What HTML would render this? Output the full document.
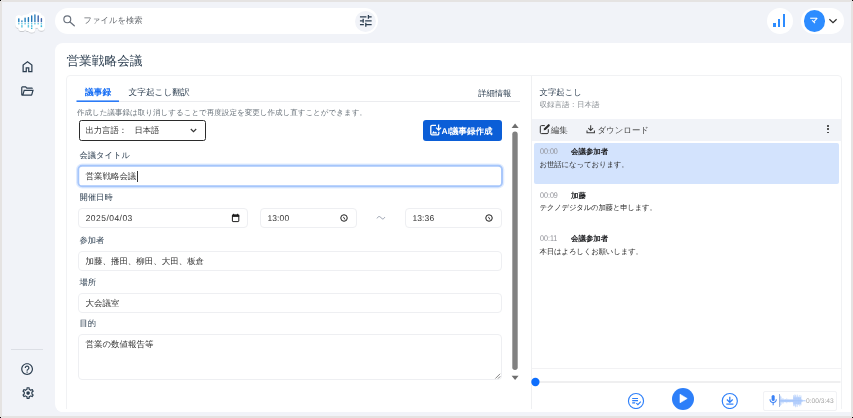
<!DOCTYPE html>
<html lang="ja">
<head>
<meta charset="utf-8">
<title>営業戦略会議</title>
<style>
*{box-sizing:border-box;margin:0;padding:0}
html,body{width:853px;height:418px;overflow:hidden;background:#e5e3e2}
body{text-rendering:geometricPrecision;font-family:"Liberation Sans",sans-serif;color:#3c4043;position:relative;font-size:8.3px;line-height:1}
.abs{position:absolute}
/* all children use absolute target-image coordinates via offset wrappers */
#app{will-change:transform;position:absolute;left:2px;top:2px;width:849px;height:414px;background:#f1f3f8;overflow:hidden}
#appo{position:absolute;left:-2px;top:-2px;width:853px;height:418px}
#main{position:absolute;left:55px;top:43px;width:800px;height:368.5px;background:#fff;border-radius:8px 0 0 8px;overflow:hidden}
#maino{position:absolute;left:-55px;top:-43px;width:853px;height:418px}
.t{position:absolute;white-space:nowrap;line-height:1}
.corner{position:absolute;width:1px;height:1px;background:#000}
.circ{position:absolute;border-radius:50%}
.inp{position:absolute;border:1px solid #eeeff2;border-radius:4px;background:#fff}
.lbl{position:absolute;white-space:nowrap;font-size:8.3px;color:#2c3e50;line-height:1}
.val{position:absolute;white-space:nowrap;font-size:8.47px;color:#333;line-height:1}
.sm{position:absolute;white-space:nowrap;font-size:7.45px;color:#2a2a2a;line-height:1}
.tm{position:absolute;white-space:nowrap;font-size:8.2px;color:#8f9097;line-height:1;transform-origin:0 50%;transform:scaleX(.87)}
.b{font-weight:bold;color:#202124}
</style>
</head>
<body>
<div class="corner" style="left:0;top:0"></div>
<div class="corner" style="left:852px;top:0"></div>
<div class="corner" style="left:0;top:417px"></div>
<div class="corner" style="left:852px;top:417px"></div>
<div id="app"><div id="appo">

<!-- logo -->
<svg class="abs" style="left:10px;top:6px" width="42" height="32" viewBox="10 6 42 32"><defs><filter id="ls" x="-20%" y="-20%" width="140%" height="150%"><feDropShadow dx="0" dy="0.6" stdDeviation="0.7" flood-color="#000" flood-opacity="0.28"/></filter></defs><g filter="url(#ls)"><path d="M18.8 18.7 V24.3" stroke="#fff" stroke-width="7.2" stroke-linecap="round"/><path d="M21.9 20.7 V27.4" stroke="#fff" stroke-width="7.2" stroke-linecap="round"/><path d="M25.1 18.0 V24.3" stroke="#fff" stroke-width="7.2" stroke-linecap="round"/><path d="M28.4 17.6 V27.4" stroke="#fff" stroke-width="7.2" stroke-linecap="round"/><path d="M31.7 15.8 V29.0" stroke="#fff" stroke-width="7.2" stroke-linecap="round"/><path d="M34.9 14.8 V24.3" stroke="#fff" stroke-width="7.2" stroke-linecap="round"/><path d="M38.2 15.8 V24.3" stroke="#fff" stroke-width="7.2" stroke-linecap="round"/><path d="M41.4 18.6 V27.1" stroke="#fff" stroke-width="7.2" stroke-linecap="round"/></g><rect x="18.10" y="18.2" width="1.4" height="4.10" rx="0.6" fill="#1f7fbf"/><rect x="18.10" y="23.30" width="1.4" height="1" fill="#2bb5d8"/><rect x="21.20" y="20.2" width="1.4" height="2.10" rx="0.6" fill="#2a86c4"/><rect x="21.20" y="23.30" width="1.4" height="1" fill="#2bb5d8"/><rect x="21.20" y="25.30" width="1.4" height="1" fill="#2bb5d8"/><rect x="21.20" y="26.40" width="1.4" height="1" fill="#2bb5d8"/><rect x="24.40" y="17.5" width="1.4" height="4.80" rx="0.6" fill="#1f7fbf"/><rect x="24.40" y="23.30" width="1.4" height="1" fill="#2bb5d8"/><rect x="27.70" y="17.1" width="1.4" height="5.20" rx="0.6" fill="#1f78b8"/><rect x="27.70" y="23.30" width="1.4" height="1" fill="#2bb5d8"/><rect x="27.70" y="25.30" width="1.4" height="1" fill="#2bb5d8"/><rect x="27.70" y="26.40" width="1.4" height="1" fill="#2bb5d8"/><rect x="31.00" y="15.3" width="1.4" height="7.00" rx="0.6" fill="#2279b9"/><rect x="31.00" y="23.30" width="1.4" height="1" fill="#2bb5d8"/><rect x="31.00" y="25.30" width="1.4" height="1" fill="#2bb5d8"/><rect x="31.00" y="26.40" width="1.4" height="1" fill="#2bb5d8"/><rect x="31.00" y="28.00" width="1.4" height="1" fill="#2bb5d8"/><rect x="34.20" y="14.3" width="1.4" height="8.00" rx="0.6" fill="#2b7dbb"/><rect x="34.20" y="23.30" width="1.4" height="1" fill="#2bb5d8"/><rect x="37.50" y="15.3" width="1.4" height="7.00" rx="0.6" fill="#3f66ad"/><rect x="37.50" y="23.30" width="1.4" height="1" fill="#2bb5d8"/><rect x="40.70" y="18.1" width="1.4" height="4.20" rx="0.6" fill="#3f66ad"/><rect x="40.70" y="23.30" width="1.4" height="1" fill="#2bb5d8"/><rect x="40.70" y="25.30" width="1.4" height="1" fill="#2bb5d8"/><rect x="40.70" y="26.10" width="1.4" height="1" fill="#2bb5d8"/></svg>

<!-- search -->
<div class="abs" style="left:55px;top:8px;width:322.5px;height:26px;border-radius:13px;background:#fff"></div>
<svg class="abs" style="left:60.8px;top:13px" width="16" height="16" viewBox="0 0 16 16"><circle cx="6.3" cy="6.3" r="3.45" fill="none" stroke="#68707c" stroke-width="1.15"/><path d="M9 9 L13.3 12.8" stroke="#68707c" stroke-width="1.25" stroke-linecap="round"/></svg>
<div class="t" style="left:83.5px;top:16.1px;font-size:8.3px;color:#6b6f74">ファイルを検索</div>
<div class="circ" style="left:355px;top:10.5px;width:21px;height:21px;background:#f1f3f8"></div>
<svg class="abs" style="left:357.5px;top:13.2px" width="15.6" height="15.6" viewBox="0 0 24 24"><path fill="#2c3e50" d="M3 17v2h6v-2H3zM3 5v2h10V5H3zm10 16v-2h8v-2h-8v-2h-2v6h2zM7 9v2H3v2h4v2h2V9H7zm14 4v-2H11v2h10zm-6-4h2V7h4V5h-4V3h-2v6z"/></svg>

<!-- right top -->
<div class="circ" style="left:767px;top:8px;width:26px;height:26px;background:#fff"></div>
<div class="abs" style="left:773px;top:23.2px;width:2.6px;height:3.6px;background:#2d8cff"></div>
<div class="abs" style="left:777.8px;top:19.3px;width:2.6px;height:7.5px;background:#2d8cff"></div>
<div class="abs" style="left:782.6px;top:14.3px;width:2.6px;height:12.5px;background:#2d8cff"></div>
<div class="abs" style="left:801px;top:8px;width:43px;height:26px;border-radius:13px;background:#fff"></div>
<div class="circ" style="left:803.7px;top:10.2px;width:21.4px;height:21.5px;background:#2d8cff"></div>
<div class="t" style="left:809.8px;top:16.3px;font-size:8.4px;color:#fff;font-weight:bold">マ</div>
<svg class="abs" style="left:828px;top:17px" width="10" height="8" viewBox="0 0 10 8"><path d="M1.4 2.3 L5 5.7 L8.6 2.3" fill="none" stroke="#2b2b2b" stroke-width="1.2"/></svg>

<!-- sidebar -->
<svg class="abs" style="left:19.8px;top:59.3px" width="15" height="15" viewBox="0 0 24 24"><path fill="#2c3e50" d="M6 19h3v-6h6v6h3v-9l-6-4.5L6 10Zm-2 2V9l8-6 8 6v12h-7v-6h-2v6Z"/></svg>
<svg class="abs" style="left:20.2px;top:83.6px" width="14.1" height="14.1" viewBox="0 0 24 24"><path fill="#2c3e50" d="M4 20q-.825 0-1.412-.587Q2 18.825 2 18V6q0-.825.588-1.412Q3.175 4 4 4h6l2 2h8q.825 0 1.413.588Q22 7.175 22 8H11.175l-2-2H4v12l2.400-8h17.100l-2.575 8.575q-.2.650-.738 1.038Q19.650 20 19 20Zm2.100-2H19l1.800-6H7.900Z"/></svg>
<div class="abs" style="left:11px;top:348.5px;width:32px;height:1px;background:#dcdfe5"></div>
<svg class="abs" style="left:20.3px;top:361.7px" width="14.2" height="14.2" viewBox="0 0 24 24"><path fill="#2c3e50" d="M11 18h2v-2h-2v2zm1-16C6.48 2 2 6.48 2 12s4.48 10 10 10 10-4.480 10-10S17.52 2 12 2zm0 18c-4.410 0-8-3.590-8-8s3.590-8 8-8 8 3.590 8 8-3.590 8-8 8zm0-14c-2.210 0-4 1.790-4 4h2c0-1.100.9-2 2-2s2 .9 2 2c0 2-3 1.750-3 5h2c0-2.250 3-2.500 3-5 0-2.210-1.790-4-4-4z"/></svg>
<svg class="abs" style="left:20.5px;top:385.6px" width="14.2" height="14.2" viewBox="0 0 24 24"><path fill="#2c3e50" d="M19.430 12.980c.040-.320.070-.640.070-.980 0-.340-.030-.660-.070-.980l2.110-1.650c.190-.150.240-.420.120-.640l-2-3.460c-.090-.160-.260-.250-.440-.250-.060 0-.120.010-.170.030l-2.490 1c-.520-.400-1.080-.730-1.690-.980l-.380-2.650C14.460 2.180 14.250 2 14 2h-4c-.250 0-.460.180-.490.420l-.380 2.650c-.610.250-1.170.590-1.690.98l-2.490-1c-.060-.020-.120-.030-.180-.030-.170 0-.340.090-.430.250l-2 3.460c-.130.220-.070.490.12.640l2.110 1.650c-.040.320-.070.650-.070.980 0 .330.030.660.070.980l-2.110 1.650c-.190.150-.240.420-.12.640l2 3.460c.090.160.260.250.440.250.060 0 .120-.010.170-.030l2.490-1c.520.400 1.080.730 1.690.980l.380 2.650c.030.240.240.420.490.420h4c.250 0 .460-.180.490-.420l.380-2.650c.610-.250 1.170-.590 1.690-.980l2.490 1c.060.020.120.030.180.030.170 0 .340-.090.430-.250l2-3.460c.120-.220.070-.490-.12-.640l-2.110-1.650zm-1.980-1.710c.040.310.050.520.050.730 0 .210-.020.430-.050.730l-.140 1.130.89.700 1.080.840-.7 1.210-1.270-.510-1.040-.420-.9.680c-.430.320-.840.560-1.250.730l-1.060.430-.160 1.130-.2 1.350h-1.400l-.19-1.350-.16-1.130-1.060-.430c-.430-.180-.830-.410-1.230-.710l-.910-.7-1.060.430-1.270.510-.7-1.210 1.080-.840.890-.7-.140-1.130c-.030-.310-.050-.540-.050-.740s.020-.430.050-.730l.140-1.130-.89-.7-1.080-.840.7-1.210 1.270.510 1.040.420.900-.680c.430-.320.840-.560 1.250-.730l1.060-.430.160-1.130.2-1.350h1.390l.19 1.350.16 1.130 1.060.430c.430.180.830.410 1.230.710l.910.7 1.060-.430 1.270-.510.700 1.210-1.070.850-.89.700.14 1.130z"/><circle cx="12" cy="12" r="3.1" fill="#2c3e50"/></svg>

<!-- main -->
<div id="main"><div id="maino">
  <div class="t" style="left:66.4px;top:55px;font-size:12.7px;color:#2c3e50">営業戦略会議</div>
  <div class="abs" id="card" style="left:65.5px;top:75px;width:776px;height:360px;border:1px solid #f1f2f4;border-radius:4px"></div>
  <div class="abs" style="left:531px;top:76px;width:1px;height:340px;background:#eff0f2"></div>

  <div class="abs" style="left:55px;top:409.3px;width:800px;height:4px;background:#fff;z-index:5"></div>
  <!-- LEFT -->
  <div class="t" style="left:85px;top:88px;font-size:8.7px;color:#1a70f5;font-weight:bold">議事録</div>
  <div class="t" style="left:128.5px;top:88px;font-size:8.7px;color:#2c3e50">文字起こし翻訳</div>
  <div class="t" style="left:478.2px;top:88.7px;font-size:8.3px;color:#2c3e50">詳細情報</div>
  <div class="abs" style="left:76.5px;top:101px;width:443.5px;height:1px;background:#ebecef"></div>
  <svg class="abs" style="left:76px;top:99px" width="44" height="4" viewBox="76 99 44 4"><rect x="76.5" y="100.4" width="42.5" height="1.6" fill="#2b7bf7"/></svg>
  <div class="t" style="left:77px;top:108.7px;font-size:7.54px;color:#6c757d">作成した議事録は取り消しすることで再度設定を変更し作成し直すことができます。</div>

  <div class="abs" style="left:78.5px;top:120px;width:127px;height:20.5px;border:1px solid #2b2b2b;border-radius:2.5px;background:#fff"></div>
  <div class="t" style="left:85.5px;top:126px;font-size:8.3px;color:#333">出力言語：<span style="margin-left:7.5px">日本語</span></div>
  <svg class="abs" style="left:190.3px;top:128.3px" width="7" height="5" viewBox="0 0 7 5"><path d="M0.8 1 L3.5 3.7 L6.2 1" fill="none" stroke="#333" stroke-width="1.1"/></svg>

  <div class="abs" style="left:422.6px;top:119.8px;width:79.2px;height:21.2px;border-radius:3px;background:#0b5ed7"></div>
  <svg class="abs" style="left:429px;top:123px" width="13" height="13" viewBox="429 123 13 13"><path d="M436 125.3 H432 a1.2 1.2 0 0 0 -1.2 1.2 V133.6 a1.2 1.2 0 0 0 1.2 1.2 H437.6 a1.2 1.2 0 0 0 1.2 -1.2 V131.8" fill="none" stroke="#fff" stroke-width="1.35"/><path d="M438.6 124.4 V129.8 M436.1 127.6 L438.6 130.1 L441.1 127.6" fill="none" stroke="#fff" stroke-width="1.3"/><path d="M431.9 133.4 L433.6 131 L434.9 132.5 L435.9 131.6 L437.3 133.4 Z" fill="#fff"/></svg>
  <div class="t" style="left:441.6px;top:126.7px;font-size:8.5px;color:#fff;font-weight:bold">AI議事録作成</div>

  <!-- scrollbar -->
    <svg class="abs" style="left:510px;top:120px" width="12" height="264" viewBox="510 120 12 264"><rect x="512.3" y="131.6" width="5.4" height="238.3" rx="2.7" fill="#818181"/><path d="M511.6 128 L515.1 123.6 L518.6 128 Z" fill="#6e6e6e"/><path d="M511.6 375.7 L515.1 380.1 L518.6 375.7 Z" fill="#6e6e6e"/></svg>

  <div class="lbl" style="left:79.5px;top:151.3px">会議タイトル</div>
  <svg class="abs" style="left:75px;top:162px" width="430" height="28" viewBox="75 162 430 28"><rect x="77.5" y="165" width="425.3" height="22.1" rx="4.6" fill="none" stroke="#a9c8fb" stroke-opacity=".35" stroke-width="3"/><rect x="78.3" y="165.8" width="423.7" height="20.5" rx="3.8" fill="#fff" stroke="#a6c6fb" stroke-width="1.9"/></svg>
  <div class="val" style="left:85.5px;top:172px">営業戦略会議</div>
  <div class="abs" style="left:136.5px;top:171px;width:.8px;height:10.5px;background:#333"></div>

  <div class="lbl" style="left:79.5px;top:193.3px">開催日時</div>
  <div class="inp" style="left:78px;top:208px;width:169.5px;height:20px"></div>
  <div class="val" style="left:85.7px;top:213.7px;letter-spacing:.47px">2025/04/03</div>
  <svg class="abs" style="left:231px;top:213px" width="10" height="10" viewBox="231 213 10 10"><rect x="232.4" y="215" width="6.4" height="6.6" rx="0.6" fill="none" stroke="#1f1f1f" stroke-width="1"/><rect x="232" y="214.7" width="7.2" height="2.2" fill="#1f1f1f"/><rect x="233.1" y="213.8" width="1" height="1.4" fill="#1f1f1f"/><rect x="237.1" y="213.8" width="1" height="1.4" fill="#1f1f1f"/></svg>
  <div class="inp" style="left:260px;top:208px;width:97px;height:20px"></div>
  <div class="val" style="left:267.5px;top:213.7px;letter-spacing:.1px">13:00</div>
  <svg class="abs" style="left:375px;top:213px" width="12" height="10" viewBox="375 213 12 10"><path d="M377 218.4 C378.3 215.9 380 216.2 381 217.7 S383.6 219.6 384.8 217.1" fill="none" stroke="#8f98a8" stroke-width="0.95"/></svg>
  <div class="inp" style="left:405.3px;top:208px;width:97px;height:20px"></div>
  <div class="val" style="left:412.5px;top:213.7px;letter-spacing:.1px">13:36</div>

  <svg class="abs" style="left:338.5px;top:213.2px" width="10" height="10" viewBox="0 0 10 10"><circle cx="5" cy="5" r="3.25" fill="none" stroke="#1f1f1f" stroke-width="1"/><path d="M4.6 4.2 L5.8 6.2" stroke="#1f1f1f" stroke-width="0.9" stroke-linecap="round"/></svg>
  <svg class="abs" style="left:483.8px;top:213.2px" width="10" height="10" viewBox="0 0 10 10"><circle cx="5" cy="5" r="3.25" fill="none" stroke="#1f1f1f" stroke-width="1"/><path d="M4.6 4.2 L5.8 6.2" stroke="#1f1f1f" stroke-width="0.9" stroke-linecap="round"/></svg>
  <div class="lbl" style="left:79.5px;top:236.3px">参加者</div>
  <div class="inp" style="left:78px;top:251px;width:424.3px;height:20.4px"></div>
  <div class="val" style="left:85.5px;top:257px">加藤、播田、柳田、大田、板倉</div>

  <div class="lbl" style="left:79.5px;top:277.5px">場所</div>
  <div class="inp" style="left:78px;top:293px;width:424.3px;height:20px"></div>
  <div class="val" style="left:85.5px;top:298.8px">大会議室</div>

  <div class="lbl" style="left:79.5px;top:318.8px">目的</div>
  <div class="inp" style="left:78px;top:334px;width:424.3px;height:45.6px"></div>
  <svg class="abs" style="left:494px;top:372px;z-index:2" width="8" height="8" viewBox="494 372 8 8"><path d="M495.4 378.5 L500.1 373.8 M498 378.6 L500.2 376.4" stroke="#666" stroke-width=".8" fill="none"/></svg>
  <div class="val" style="left:85.5px;top:339.8px">営業の数値報告等</div>

  <!-- RIGHT -->
  <div class="t" style="left:539.5px;top:88px;font-size:8.4px;color:#2c3e50">文字起こし</div>
  <div class="t" style="left:539.5px;top:101px;font-size:7.5px;color:#8a8f94">収録言語：日本語</div>
  <div class="abs" style="left:532px;top:119.2px;width:309px;height:22px;background:#f1f3f8"></div>
  <svg class="abs" style="left:539px;top:123px" width="12" height="12" viewBox="539 123 12 12"><path d="M544.8 125.6 H541.5 a1.2 1.2 0 0 0 -1.2 1.2 V132.4 a1.2 1.2 0 0 0 1.2 1.2 H547.1 a1.2 1.2 0 0 0 1.2 -1.2 V129.2" fill="none" stroke="#2a2a2a" stroke-width="1"/><path d="M543.7 130.3 L544 128.5 L548.1 124.4 a0.85 0.85 0 0 1 1.2 0 l0.3 .3 a0.85 .85 0 0 1 0 1.2 L545.5 130 Z" fill="#2a2a2a"/></svg>
  <svg class="abs" style="left:585px;top:124px" width="11" height="11" viewBox="585 124 11 11"><path d="M590.7 125.3 V130.4 M588.3 128.1 L590.7 130.5 L593.1 128.1" fill="none" stroke="#3a3a3a" stroke-width="1.05"/><path d="M587 130.4 V132.8 H594.4 V130.4" fill="none" stroke="#3a3a3a" stroke-width="1.05"/></svg>
  <div class="t" style="left:550.8px;top:125.9px;font-size:8.5px;color:#444">編集</div>
  <div class="t" style="left:597.5px;top:125.9px;font-size:8.42px;color:#444">ダウンロード</div>
  <div class="circ" style="left:827.2px;top:125.2px;width:1.6px;height:1.6px;background:#333"></div>
  <div class="circ" style="left:827.2px;top:128.4px;width:1.6px;height:1.6px;background:#333"></div>
  <div class="circ" style="left:827.2px;top:131.6px;width:1.6px;height:1.6px;background:#333"></div>

  <div class="abs" style="left:533.7px;top:143.2px;width:305.5px;height:40.5px;background:#d3e3fd;border-radius:2px"></div>
  <div class="tm" style="left:539.5px;top:148.3px">00:00</div>
  <div class="sm b" style="left:571px;top:147.9px">会議参加者</div>
  <div class="sm" style="left:539.5px;top:161.2px;letter-spacing:-.14px">お世話になっております。</div>

  <div class="tm" style="left:539.5px;top:192.1px">00:09</div>
  <div class="sm b" style="left:571px;top:191.6px">加藤</div>
  <div class="sm" style="left:539.5px;top:204.2px;letter-spacing:-.25px">テクノデジタルの加藤と申します。</div>

  <div class="tm" style="left:539.5px;top:235.1px">00:11</div>
  <div class="sm b" style="left:571px;top:234.5px">会議参加者</div>
  <div class="sm" style="left:539.5px;top:248px;letter-spacing:-.18px">本日はよろしくお願いします。</div>

  <!-- player -->
  <div class="abs" style="left:532px;top:368px;width:309px;height:1px;background:#f2f2f4"></div>
  <svg class="abs" style="left:530px;top:376px" width="312" height="12" viewBox="530 376 312 12"><rect x="536" y="381.35" width="304.5" height="1.3" fill="#e7e7e8"/><circle cx="535.4" cy="382" r="4.15" fill="#0d6efd"/></svg>
    <svg class="abs" style="left:627px;top:391.5px" width="18" height="18" viewBox="627 391.5 18 18"><circle cx="636" cy="400.5" r="7.55" fill="#fff" stroke="#2d7ff9" stroke-width="1.15"/><path d="M632.2 398 H638 M632.2 400.2 H638 M632.2 402.4 H635.2" stroke="#2d7ff9" stroke-width="1.2" fill="none"/><path d="M636.3 402.6 L637.9 404.1 L640.8 401.2" stroke="#2d7ff9" stroke-width="1.15" fill="none"/></svg>
  <svg class="abs" style="left:721px;top:391.5px" width="18" height="18" viewBox="721 391.5 18 18"><circle cx="729.8" cy="400.5" r="7.55" fill="#fff" stroke="#2d7ff9" stroke-width="1.15"/><path d="M729.8 396.2 V401.6 M726.9 399 L729.8 401.9 L732.7 399" stroke="#2d7ff9" stroke-width="1.25" fill="none"/><path d="M726.3 403.6 H733.4" stroke="#2d7ff9" stroke-width="1.2"/></svg>
  <div class="circ" style="left:671.7px;top:387.5px;width:22.2px;height:22.2px;background:#2d7ff9;z-index:6"></div>
  <svg class="abs" style="left:678px;top:393.1px;z-index:7" width="11" height="11" viewBox="0 0 11 11"><path d="M2 1.2 L9.2 5.5 L2 9.8 Z" fill="#fff" stroke="#fff" stroke-width=".6" stroke-linejoin="round"/></svg>
  <div class="abs" style="left:763px;top:391px;width:74px;height:20px;border:1px solid #f1f2f5;border-radius:2px;z-index:6"></div>
  <svg class="abs" style="left:764px;top:392px" width="72" height="18" viewBox="764 392 72 18"><path d="M779.90 396.82V404.74M780.52 395.60V405.83M781.14 396.68V404.91M781.76 398.99V402.57M782.38 398.23V403.49M783.00 399.92V401.66M783.62 398.44V403.38M784.24 399.48V402.13M784.86 399.33V402.12M785.48 399.16V402.32M786.10 399.53V402.09M786.72 398.41V403.23M787.34 399.67V401.96M787.96 398.92V402.41M788.58 399.55V402.13M789.20 399.69V401.80M789.82 399.14V402.62M790.44 399.68V401.97M791.06 399.10V402.26M791.68 399.67V401.83M792.30 399.13V402.30M792.92 399.55V402.17M793.54 395.12V406.22M794.16 396.16V405.20M794.78 394.53V406.13M795.40 394.87V407.29M796.02 395.60V406.52M796.64 397.15V404.08M797.26 394.51V407.09M797.88 395.64V405.24M798.50 396.80V404.64M799.12 397.17V404.44M799.74 394.96V406.33M800.36 397.00V404.23M800.98 395.48V405.34M801.60 399.25V402.36M802.22 399.61V401.99" stroke="#a4c5fb" stroke-width="0.5" fill="none"/><path d="M780 400.8H805.6" stroke="#a4c5fb" stroke-width="0.9"/><rect x="793.3" y="397.40000000000003" width="7.8" height="6.8" fill="#a4c5fb" opacity=".55"/><rect x="780" y="399.8" width="13.3" height="2" fill="#a4c5fb" opacity=".6"/><rect x="779.1" y="394" width="0.7" height="13" fill="#7f9bd0"/><rect x="771.6" y="395" width="3.1" height="6" rx="1.55" fill="#3b82f6"/><path d="M770 399.3 a3.15 3.15 0 0 0 6.3 0 M773.15 402.5 V405.3" fill="none" stroke="#3b82f6" stroke-width="1.05"/></svg>
  <div class="t" style="left:806px;top:398.9px;font-size:6.65px;color:#a6a6a6">0:00/3:43</div>
</div></div>

</div></div>
</body>
</html>
